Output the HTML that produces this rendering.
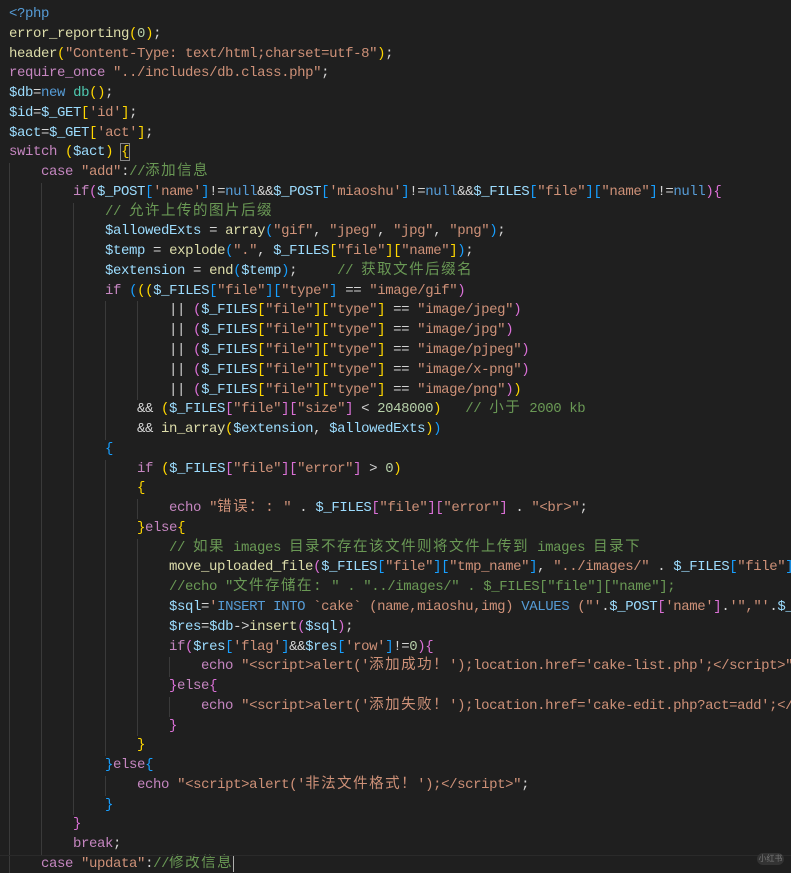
<!DOCTYPE html>
<html><head><meta charset="utf-8"><style>
html,body{margin:0;padding:0;background:#1f1f1f;width:791px;height:873px;overflow:hidden}
#ed{position:absolute;left:0;top:5px;width:791px;height:868px;overflow:hidden;font-family:"Liberation Mono","Noto Sans CJK SC",monospace;font-size:14px;letter-spacing:-0.4px;color:#d4d4d4}
.l{height:19.77px;line-height:19.77px;white-space:pre;padding-left:9px;position:relative}
.g{position:absolute;top:0;width:1px;height:19.77px;background:#3a3a3a}
.h{font-size:14.5px;letter-spacing:1.5px}
.v{color:#9cdcfe}.f{color:#dcdcaa}.s{color:#ce9178}.k{color:#c586c0}.b{color:#569cd6}.c{color:#6a9955}.n{color:#b5cea8}
.y{color:#ffd700}.p{color:#da70d6}.q{color:#179fff}.w{color:#d4d4d4}
.cur{outline:1px solid #888}
#wm{position:absolute;left:757px;top:853px;width:27px;height:12px;border-radius:6px;background:#333;color:#777;font:8px "Noto Sans CJK SC",sans-serif;text-align:center;line-height:12px}
#sep{position:absolute;left:0;top:855px;width:791px;height:1px;background:#2a2a2a}
</style></head><body>
<div id="ed">
<div class="l"><span class="b">&lt;?php</span></div>
<div class="l"><span class="f">error_reporting</span><span class="y">(</span><span class="n">0</span><span class="y">)</span>;</div>
<div class="l"><span class="f">header</span><span class="y">(</span><span class="s">"Content-Type: text/html;charset=utf-8"</span><span class="y">)</span>;</div>
<div class="l"><span class="k">require_once</span> <span class="s">"../includes/db.class.php"</span>;</div>
<div class="l"><span class="v">$db</span>=<span class="b">new</span> <span class="f" style="color:#4ec9b0">db</span><span class="y">()</span>;</div>
<div class="l"><span class="v">$id</span>=<span class="v">$_GET</span><span class="y">[</span><span class="s">'id'</span><span class="y">]</span>;</div>
<div class="l"><span class="v">$act</span>=<span class="v">$_GET</span><span class="y">[</span><span class="s">'act'</span><span class="y">]</span>;</div>
<div class="l"><span class="k">switch</span> <span class="y">(</span><span class="v">$act</span><span class="y">)</span> <span class="y cur">{</span></div>
<div class="l"><i class="g" style="left:9px"></i>    <span class="k">case</span> <span class="s">"add"</span>:<span class="c">//<span class="h">添加信息</span></span></div>
<div class="l"><i class="g" style="left:9px"></i><i class="g" style="left:41px"></i>        <span class="k">if</span><span class="p">(</span><span class="v">$_POST</span><span class="q">[</span><span class="s">'name'</span><span class="q">]</span>!=<span class="b">null</span>&amp;&amp;<span class="v">$_POST</span><span class="q">[</span><span class="s">'miaoshu'</span><span class="q">]</span>!=<span class="b">null</span>&amp;&amp;<span class="v">$_FILES</span><span class="q">[</span><span class="s">"file"</span><span class="q">][</span><span class="s">"name"</span><span class="q">]</span>!=<span class="b">null</span><span class="p">){</span></div>
<div class="l"><i class="g" style="left:9px"></i><i class="g" style="left:41px"></i><i class="g" style="left:73px"></i>            <span class="c">// <span class="h">允许上传的图片后缀</span></span></div>
<div class="l"><i class="g" style="left:9px"></i><i class="g" style="left:41px"></i><i class="g" style="left:73px"></i>            <span class="v">$allowedExts</span> = <span class="f">array</span><span class="q">(</span><span class="s">"gif"</span>, <span class="s">"jpeg"</span>, <span class="s">"jpg"</span>, <span class="s">"png"</span><span class="q">)</span>;</div>
<div class="l"><i class="g" style="left:9px"></i><i class="g" style="left:41px"></i><i class="g" style="left:73px"></i>            <span class="v">$temp</span> = <span class="f">explode</span><span class="q">(</span><span class="s">"."</span>, <span class="v">$_FILES</span><span class="y">[</span><span class="s">"file"</span><span class="y">][</span><span class="s">"name"</span><span class="y">]</span><span class="q">)</span>;</div>
<div class="l"><i class="g" style="left:9px"></i><i class="g" style="left:41px"></i><i class="g" style="left:73px"></i>            <span class="v">$extension</span> = <span class="f">end</span><span class="q">(</span><span class="v">$temp</span><span class="q">)</span>;     <span class="c">// <span class="h">获取文件后缀名</span></span></div>
<div class="l"><i class="g" style="left:9px"></i><i class="g" style="left:41px"></i><i class="g" style="left:73px"></i>            <span class="k">if</span> <span class="q">(</span><span class="y">((</span><span class="v">$_FILES</span><span class="q">[</span><span class="s">"file"</span><span class="q">][</span><span class="s">"type"</span><span class="q">]</span> == <span class="s">"image/gif"</span><span class="p">)</span></div>
<div class="l"><i class="g" style="left:9px"></i><i class="g" style="left:41px"></i><i class="g" style="left:73px"></i><i class="g" style="left:105px"></i><i class="g" style="left:137px"></i>                    || <span class="p">(</span><span class="v">$_FILES</span><span class="y">[</span><span class="s">"file"</span><span class="y">][</span><span class="s">"type"</span><span class="y">]</span> == <span class="s">"image/jpeg"</span><span class="p">)</span></div>
<div class="l"><i class="g" style="left:9px"></i><i class="g" style="left:41px"></i><i class="g" style="left:73px"></i><i class="g" style="left:105px"></i><i class="g" style="left:137px"></i>                    || <span class="p">(</span><span class="v">$_FILES</span><span class="y">[</span><span class="s">"file"</span><span class="y">][</span><span class="s">"type"</span><span class="y">]</span> == <span class="s">"image/jpg"</span><span class="p">)</span></div>
<div class="l"><i class="g" style="left:9px"></i><i class="g" style="left:41px"></i><i class="g" style="left:73px"></i><i class="g" style="left:105px"></i><i class="g" style="left:137px"></i>                    || <span class="p">(</span><span class="v">$_FILES</span><span class="y">[</span><span class="s">"file"</span><span class="y">][</span><span class="s">"type"</span><span class="y">]</span> == <span class="s">"image/pjpeg"</span><span class="p">)</span></div>
<div class="l"><i class="g" style="left:9px"></i><i class="g" style="left:41px"></i><i class="g" style="left:73px"></i><i class="g" style="left:105px"></i><i class="g" style="left:137px"></i>                    || <span class="p">(</span><span class="v">$_FILES</span><span class="y">[</span><span class="s">"file"</span><span class="y">][</span><span class="s">"type"</span><span class="y">]</span> == <span class="s">"image/x-png"</span><span class="p">)</span></div>
<div class="l"><i class="g" style="left:9px"></i><i class="g" style="left:41px"></i><i class="g" style="left:73px"></i><i class="g" style="left:105px"></i><i class="g" style="left:137px"></i>                    || <span class="p">(</span><span class="v">$_FILES</span><span class="y">[</span><span class="s">"file"</span><span class="y">][</span><span class="s">"type"</span><span class="y">]</span> == <span class="s">"image/png"</span><span class="p">)</span><span class="y">)</span></div>
<div class="l"><i class="g" style="left:9px"></i><i class="g" style="left:41px"></i><i class="g" style="left:73px"></i><i class="g" style="left:105px"></i>                &amp;&amp; <span class="y">(</span><span class="v">$_FILES</span><span class="p">[</span><span class="s">"file"</span><span class="p">][</span><span class="s">"size"</span><span class="p">]</span> &lt; <span class="n">2048000</span><span class="y">)</span>   <span class="c">// <span class="h">小于</span> 2000 kb</span></div>
<div class="l"><i class="g" style="left:9px"></i><i class="g" style="left:41px"></i><i class="g" style="left:73px"></i><i class="g" style="left:105px"></i>                &amp;&amp; <span class="f">in_array</span><span class="y">(</span><span class="v">$extension</span>, <span class="v">$allowedExts</span><span class="y">)</span><span class="q">)</span></div>
<div class="l"><i class="g" style="left:9px"></i><i class="g" style="left:41px"></i><i class="g" style="left:73px"></i>            <span class="q">{</span></div>
<div class="l"><i class="g" style="left:9px"></i><i class="g" style="left:41px"></i><i class="g" style="left:73px"></i><i class="g" style="left:105px"></i>                <span class="k">if</span> <span class="y">(</span><span class="v">$_FILES</span><span class="p">[</span><span class="s">"file"</span><span class="p">][</span><span class="s">"error"</span><span class="p">]</span> &gt; <span class="n">0</span><span class="y">)</span></div>
<div class="l"><i class="g" style="left:9px"></i><i class="g" style="left:41px"></i><i class="g" style="left:73px"></i><i class="g" style="left:105px"></i>                <span class="y">{</span></div>
<div class="l"><i class="g" style="left:9px"></i><i class="g" style="left:41px"></i><i class="g" style="left:73px"></i><i class="g" style="left:105px"></i><i class="g" style="left:137px"></i>                    <span class="k">echo</span> <span class="s">"<span class="h">错误：:</span> "</span> . <span class="v">$_FILES</span><span class="p">[</span><span class="s">"file"</span><span class="p">][</span><span class="s">"error"</span><span class="p">]</span> . <span class="s">"&lt;br&gt;"</span>;</div>
<div class="l"><i class="g" style="left:9px"></i><i class="g" style="left:41px"></i><i class="g" style="left:73px"></i><i class="g" style="left:105px"></i>                <span class="y">}</span><span class="k">else</span><span class="y">{</span></div>
<div class="l"><i class="g" style="left:9px"></i><i class="g" style="left:41px"></i><i class="g" style="left:73px"></i><i class="g" style="left:105px"></i><i class="g" style="left:137px"></i>                    <span class="c">// <span class="h">如果</span> images <span class="h">目录不存在该文件则将文件上传到</span> images <span class="h">目录下</span></span></div>
<div class="l"><i class="g" style="left:9px"></i><i class="g" style="left:41px"></i><i class="g" style="left:73px"></i><i class="g" style="left:105px"></i><i class="g" style="left:137px"></i>                    <span class="f">move_uploaded_file</span><span class="p">(</span><span class="v">$_FILES</span><span class="q">[</span><span class="s">"file"</span><span class="q">][</span><span class="s">"tmp_name"</span><span class="q">]</span>, <span class="s">"../images/"</span> . <span class="v">$_FILES</span><span class="q">[</span><span class="s">"file"</span><span class="q">][</span><span class="s">"name"</span><span class="q">]</span><span class="p">)</span>;</div>
<div class="l"><i class="g" style="left:9px"></i><i class="g" style="left:41px"></i><i class="g" style="left:73px"></i><i class="g" style="left:105px"></i><i class="g" style="left:137px"></i>                    <span class="c">//echo "<span class="h">文件存储在:</span> " . "../images/" . $_FILES["file"]["name"];</span></div>
<div class="l"><i class="g" style="left:9px"></i><i class="g" style="left:41px"></i><i class="g" style="left:73px"></i><i class="g" style="left:105px"></i><i class="g" style="left:137px"></i>                    <span class="v">$sql</span>=<span class="s">'</span><span class="b">INSERT INTO</span> <span class="s">`cake`</span> <span class="s">(name,miaoshu,img)</span> <span class="b">VALUES</span> <span class="s">("'</span>.<span class="v">$_POST</span><span class="p">[</span><span class="s">'name'</span><span class="p">]</span>.<span class="s">'","'</span>.<span class="v">$_POST</span><span class="p">[</span><span class="s">'miaoshu'</span><span class="p">]</span></div>
<div class="l"><i class="g" style="left:9px"></i><i class="g" style="left:41px"></i><i class="g" style="left:73px"></i><i class="g" style="left:105px"></i><i class="g" style="left:137px"></i>                    <span class="v">$res</span>=<span class="v">$db</span>-&gt;<span class="f">insert</span><span class="p">(</span><span class="v">$sql</span><span class="p">)</span>;</div>
<div class="l"><i class="g" style="left:9px"></i><i class="g" style="left:41px"></i><i class="g" style="left:73px"></i><i class="g" style="left:105px"></i><i class="g" style="left:137px"></i>                    <span class="k">if</span><span class="p">(</span><span class="v">$res</span><span class="q">[</span><span class="s">'flag'</span><span class="q">]</span>&amp;&amp;<span class="v">$res</span><span class="q">[</span><span class="s">'row'</span><span class="q">]</span>!=<span class="n">0</span><span class="p">){</span></div>
<div class="l"><i class="g" style="left:9px"></i><i class="g" style="left:41px"></i><i class="g" style="left:73px"></i><i class="g" style="left:105px"></i><i class="g" style="left:137px"></i><i class="g" style="left:169px"></i>                        <span class="k">echo</span> <span class="s">"&lt;script&gt;alert('<span class="h">添加成功！</span>');location.href='cake-list.php';&lt;/script&gt;"</span>;</div>
<div class="l"><i class="g" style="left:9px"></i><i class="g" style="left:41px"></i><i class="g" style="left:73px"></i><i class="g" style="left:105px"></i><i class="g" style="left:137px"></i>                    <span class="p">}</span><span class="k">else</span><span class="p">{</span></div>
<div class="l"><i class="g" style="left:9px"></i><i class="g" style="left:41px"></i><i class="g" style="left:73px"></i><i class="g" style="left:105px"></i><i class="g" style="left:137px"></i><i class="g" style="left:169px"></i>                        <span class="k">echo</span> <span class="s">"&lt;script&gt;alert('<span class="h">添加失败！</span>');location.href='cake-edit.php?act=add';&lt;/script&gt;"</span>;</div>
<div class="l"><i class="g" style="left:9px"></i><i class="g" style="left:41px"></i><i class="g" style="left:73px"></i><i class="g" style="left:105px"></i><i class="g" style="left:137px"></i>                    <span class="p">}</span></div>
<div class="l"><i class="g" style="left:9px"></i><i class="g" style="left:41px"></i><i class="g" style="left:73px"></i><i class="g" style="left:105px"></i>                <span class="y">}</span></div>
<div class="l"><i class="g" style="left:9px"></i><i class="g" style="left:41px"></i><i class="g" style="left:73px"></i>            <span class="q">}</span><span class="k">else</span><span class="q">{</span></div>
<div class="l"><i class="g" style="left:9px"></i><i class="g" style="left:41px"></i><i class="g" style="left:73px"></i><i class="g" style="left:105px"></i>                <span class="k">echo</span> <span class="s">"&lt;script&gt;alert('<span class="h">非法文件格式！</span>');&lt;/script&gt;"</span>;</div>
<div class="l"><i class="g" style="left:9px"></i><i class="g" style="left:41px"></i><i class="g" style="left:73px"></i>            <span class="q">}</span></div>
<div class="l"><i class="g" style="left:9px"></i><i class="g" style="left:41px"></i>        <span class="p">}</span></div>
<div class="l"><i class="g" style="left:9px"></i><i class="g" style="left:41px"></i>        <span class="k">break</span>;</div>
<div class="l"><i class="g" style="left:9px"></i>    <span class="k">case</span> <span class="s">"updata"</span>:<span class="c">//<span class="h">修改信息</span></span><span style="border-left:1px solid #aeafad"></span></div>
</div>
<div id="sep"></div>
<div id="wm">小红书</div>
</body></html>
